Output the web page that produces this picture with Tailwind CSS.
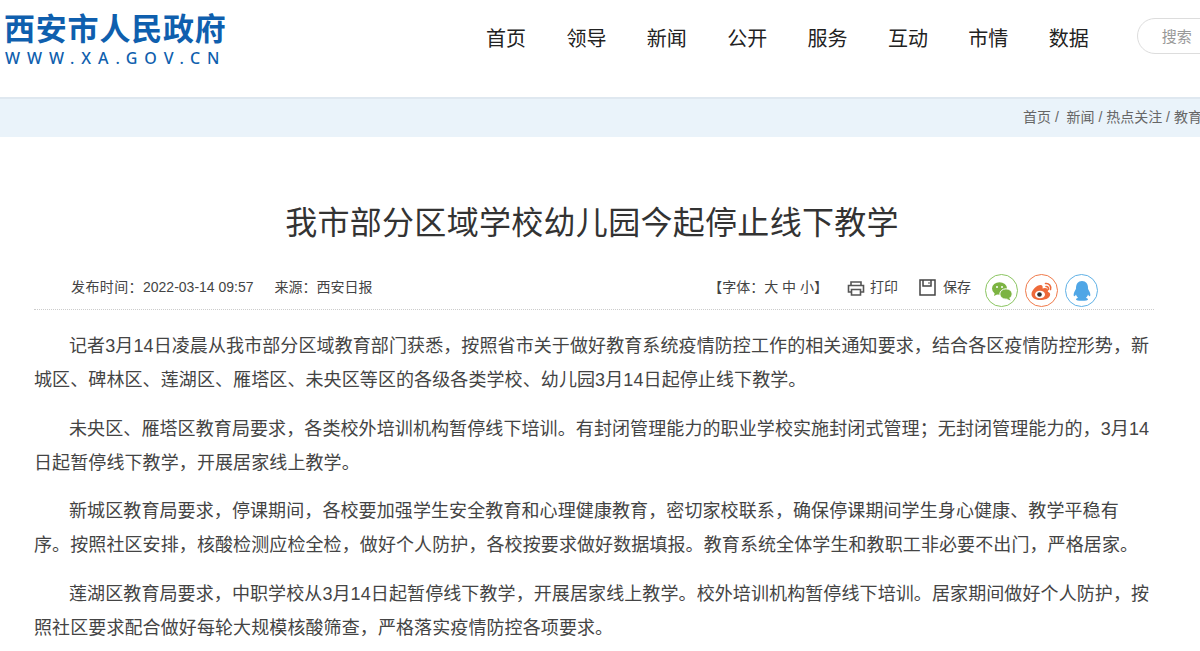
<!DOCTYPE html>
<html lang="zh-CN">
<head>
    <meta charset="UTF-8">
    <meta name="viewport" content="width=device-width, initial-scale=1.0">
    <title>我市部分区域学校幼儿园今起停止线下教学</title>
    <script src="https://cdn.jsdelivr.net/npm/@tailwindcss/browser@4"></script>
</head>
<body class="bg-white h-[651px] overflow-hidden font-['Liberation_Sans','Noto_Sans_CJK_SC',sans-serif] text-[#333]">
    <header class="h-[97px] flex items-start pl-[5px] overflow-hidden">
        <div class="w-[240px] shrink-0 pt-[12px] text-[#0f5fae]">
            <div class="text-[31px] leading-[36px] font-bold tracking-[0.8px] -ml-[1px] whitespace-nowrap">西安市人民政府</div>
            <div class="text-[16px] leading-[18px] mt-[1px] tracking-[6.9px] font-['Noto_Sans'] font-medium whitespace-nowrap">WWW.XA.GOV.CN</div>
        </div>
        <nav class="flex gap-[40.4px] ml-[241px] pt-[25px] text-[20px] leading-[28px] text-[#222] shrink-0">
            <a>首页</a>
            <a>领导</a>
            <a>新闻</a>
            <a>公开</a>
            <a>服务</a>
            <a>互动</a>
            <a>市情</a>
            <a>数据</a>
        </nav>
        <div class="ml-[48px] mt-[18px] w-[120px] h-[36px] shrink-0 border border-[#ddd] rounded-[18px] pl-[24px] text-[15px] leading-[36px] text-[#999]">搜索</div>
    </header>
    <div class="h-[40px] bg-[#eaf3fa] border-t-2 border-[#dfe8f0] pl-[1023px] whitespace-nowrap overflow-hidden text-[14px] leading-[36px] text-[#666]">首页 / &nbsp;新闻 / 热点关注 / 教育</div>
    <main class="px-[34px]">
        <h1 class="w-[1116px] text-center text-[32px] tracking-[0.3px] leading-[44px] mt-[64px] text-[#333]">我市部分区域学校幼儿园今起停止线下教学</h1>
        <div class="w-[1120px] h-[38px] mt-[27px] pr-[56px] flex items-center border-b border-dotted border-[#ccc] text-[14px] text-[#444]">
            <span class="ml-[37px] mb-[6px]"><span class="tracking-[0.4px]">发布时间：</span>2022-03-14 09:57</span>
            <span class="ml-[21px] mb-[6px]">来源：西安日报</span>
            <span class="ml-auto mb-[6px]">【字体：大 中 小】</span>
            <span class="ml-[19px] mb-[6px] flex items-center gap-[5px]">
                <svg class="w-[18px] h-[18px]" viewBox="0 0 18 18" fill="none" stroke="#555" stroke-width="1.6"><path d="M4 6V3h10v3M4 13H1.500V6.500h15V13H14"/><path d="M4.500 10.500h9V16h-9z"/></svg>
                打印
            </span>
            <span class="ml-[21px] mb-[6px] flex items-center gap-[7px]">
                <svg class="w-[17px] h-[17px]" viewBox="0 0 17 17" fill="none" stroke="#444" stroke-width="1.500"><path d="M1 1h15v15H1z"/><path d="M4 1v6h8V1"/><path d="M10 3v2" stroke="#888"/></svg>
                保存
            </span>
            <div class="ml-[14px] flex gap-[7px]">
                <span class="w-[33px] h-[33px] rounded-full border border-[#8bc561] flex items-center justify-center">
                    <svg class="w-[24px] h-[24px]" viewBox="0 0 24 24" fill="#7cb342"><ellipse cx="9.500" cy="9.500" rx="7.500" ry="6.200"/><path d="M5 13l-1 4 4-2z"/><ellipse cx="16" cy="15" rx="6.200" ry="5.200" stroke="#fff"/><path d="M19 18.500l1.500 3-4-1.800z"/><circle cx="7" cy="8" r="1" fill="#fff"/><circle cx="12" cy="8" r="1" fill="#fff"/></svg>
                </span>
                <span class="w-[33px] h-[33px] rounded-full border border-[#f07a4a] flex items-center justify-center">
                    <svg class="w-[24px] h-[24px]" viewBox="0 0 24 24"><path d="M10 21c-5 0-8.500-2.500-8.500-5.800C1.500 11 7 6 10.500 6c2 0 2.500 1.600 2 3.500 2-.8 5.500-.9 5.500 2 0 .5 0 1-.3 1.300 2.300.7 2.800 2.200 2.300 3.700C19 19.500 15 21 10 21z" fill="#ee6a3a"/><ellipse cx="10" cy="15.500" rx="5" ry="3.800" fill="#fff"/><circle cx="9.500" cy="15.500" r="2.300" fill="#333"/><path d="M15.500 4.500c3.500-.5 6 2.500 5 6M16 7.500c1.700-.2 2.800 1.200 2.300 3" fill="none" stroke="#ee6a3a" stroke-width="1.600" stroke-linecap="round"/></svg>
                </span>
                <span class="w-[33px] h-[33px] rounded-full border border-[#5fb1e6] flex items-center justify-center">
                    <svg class="w-[22px] h-[24px]" viewBox="0 0 22 24" fill="#4fa6e6"><path d="M11 2c4 0 6 3 6 7 0 1 .3 1.500 1.200 3 1 1.800 1.600 4.500.8 5.200-.5.400-1.300-.4-2-1.600-.3 1.400-1 2.500-2 3.200 1.200.5 2 1 2 1.600 0 .9-2.200 1.400-6 1.400s-6-.5-6-1.400c0-.6.800-1.100 2-1.600-1-.7-1.700-1.800-2-3.200-.7 1.200-1.500 2-2 1.600-.8-.7-.2-3.400.8-5.200C4.700 10.500 5 10 5 9c0-4 2-7 6-7z"/></svg>
                </span>
            </div>
        </div>
        <article class="w-[1117px] mt-[19px] text-[18px] tracking-[0.1px] leading-[34px] text-[#444] flex flex-col gap-[14.500px]">
            <p class="indent-[35px]">记者3月14日凌晨从我市部分区域教育部门获悉，按照省市关于做好教育系统疫情防控工作的相关通知要求，结合各区疫情防控形势，新城区、碑林区、莲湖区、雁塔区、未央区等区的各级各类学校、幼儿园3月14日起停止线下教学。</p>
            <p class="indent-[35px]">未央区、雁塔区教育局要求，各类校外培训机构暂停线下培训。有封闭管理能力的职业学校实施封闭式管理；无封闭管理能力的，3月14日起暂停线下教学，开展居家线上教学。</p>
            <p class="indent-[35px]">新城区教育局要求，停课期间，各校要加强学生安全教育和心理健康教育，密切家校联系，确保停课期间学生身心健康、教学平稳有序。按照社区安排，核酸检测应检全检，做好个人防护，各校按要求做好数据填报。教育系统全体学生和教职工非必要不出门，严格居家。</p>
            <p class="indent-[35px]">莲湖区教育局要求，中职学校从3月14日起暂停线下教学，开展居家线上教学。校外培训机构暂停线下培训。居家期间做好个人防护，按照社区要求配合做好每轮大规模核酸筛查，严格落实疫情防控各项要求。</p>
        </article>
    </main>
</body>
</html>
